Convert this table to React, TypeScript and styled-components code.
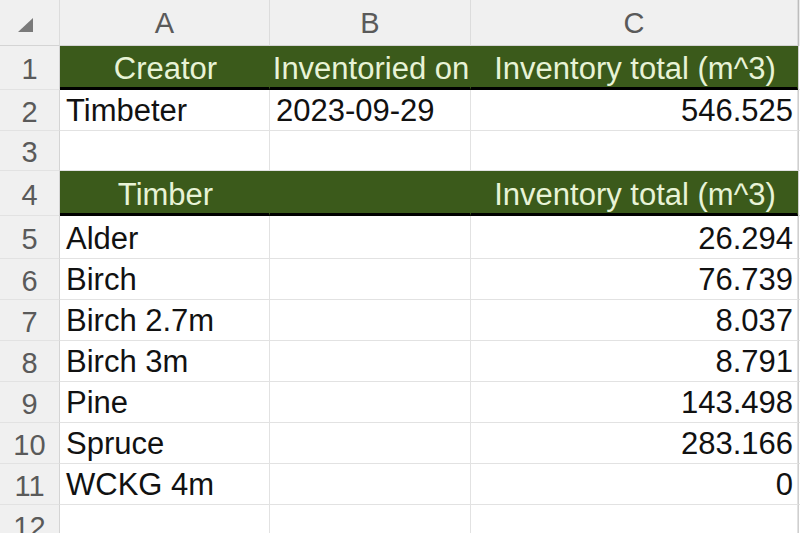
import React from "react";
import styled, { createGlobalStyle, css } from "styled-components";

const GlobalStyle = createGlobalStyle`
  html, body {
    margin: 0;
    padding: 0;
    background: #ffffff;
    overflow: hidden;
  }
  body {
    font-family: "Liberation Sans", Arial, sans-serif;
  }
`;

const Sheet = styled.div`
  display: grid;
  grid-template-columns: 60px 210px 201px 327px 1fr;
  grid-template-rows: 46px 44px 41px 40px 45px 43px repeat(6, 41px) 41px;
  width: 800px;
  height: 533px;
  overflow: hidden;
`;

const HeaderBase = css`
  display: flex;
  align-items: center;
  justify-content: center;
  background: #f0f0f0;
  color: #5a5a5a;
  font-size: 29px;
  box-sizing: border-box;
`;

const Corner = styled.div`
  ${HeaderBase};
  border-right: 1px solid #dcdcdc;
  border-bottom: 1px solid #d4d4d4;
  justify-content: flex-start;
  align-items: flex-start;
  padding: 18px 0 0 18px;
`;

const ColHead = styled.div`
  ${HeaderBase};
  border-right: 1px solid #dcdcdc;
  border-bottom: 1px solid #d4d4d4;
  padding-top: 2px;
`;

const RowHead = styled.div`
  ${HeaderBase};
  border-right: 1px solid #d4d4d4;
  border-bottom: 1px solid #e2e2e2;
  padding-top: 4px;
`;

const Cell = styled.div<{ $head?: boolean; $align?: "left" | "right" | "center" }>`
  display: flex;
  align-items: flex-end;
  justify-content: ${({ $align }) =>
    $align === "right" ? "flex-end" : $align === "center" ? "center" : "flex-start"};
  box-sizing: border-box;
  padding: 0 4px 1px 6px;
  font-size: 31px;
  line-height: 1.15;
  white-space: nowrap;
  overflow: hidden;
  color: #111111;
  background: #ffffff;
  border-right: 1px solid #e2e2e2;
  border-bottom: 1px solid #e2e2e2;

  ${({ $head }) =>
    $head &&
    css`
      background: #3b5a1b;
      color: #e8f3d6;
      border-right-color: #3b5a1b;
      border-bottom: 3px solid #000000;
      padding-bottom: 0;
    `}
`;

const EdgeCell = styled.div`
  background: #ffffff;
  border-left: 1px solid #cfcfcf;
  border-bottom: 1px solid #e2e2e2;
`;

const EdgeHead = styled.div`
  background: #eaeaea;
  border-left: 1px solid #bdbdbd;
`;

const SelectAll = () => (
  <svg width="15" height="14" viewBox="0 0 15 14">
    <polygon points="15,0 15,14 0,14" fill="#7a7a7a" />
  </svg>
);

type RowData = {
  cells: [string, string, string];
  head?: boolean;
};

const rows: RowData[] = [
  { cells: ["Creator", "Inventoried on", "Inventory total (m^3)"], head: true },
  { cells: ["Timbeter", "2023-09-29", "546.525"] },
  { cells: ["", "", ""] },
  { cells: ["Timber", "", "Inventory total (m^3)"], head: true },
  { cells: ["Alder", "", "26.294"] },
  { cells: ["Birch", "", "76.739"] },
  { cells: ["Birch 2.7m", "", "8.037"] },
  { cells: ["Birch 3m", "", "8.791"] },
  { cells: ["Pine", "", "143.498"] },
  { cells: ["Spruce", "", "283.166"] },
  { cells: ["WCKG 4m", "", "0"] },
  { cells: ["", "", ""] },
];

const App: React.FC = () => {
  return (
    <>
      <GlobalStyle />
      <Sheet>
        <Corner>
          <SelectAll />
        </Corner>
        <ColHead>A</ColHead>
        <ColHead>B</ColHead>
        <ColHead>C</ColHead>
        <EdgeHead />

        {rows.map((row, i) => (
          <React.Fragment key={i}>
            <RowHead>{i + 1}</RowHead>
            {row.cells.map((text, j) => (
              <Cell
                key={j}
                $head={row.head}
                $align={row.head ? "center" : j === 2 ? "right" : "left"}
              >
                {text}
              </Cell>
            ))}
            <EdgeCell />
          </React.Fragment>
        ))}
      </Sheet>
    </>
  );
};

export default App;
